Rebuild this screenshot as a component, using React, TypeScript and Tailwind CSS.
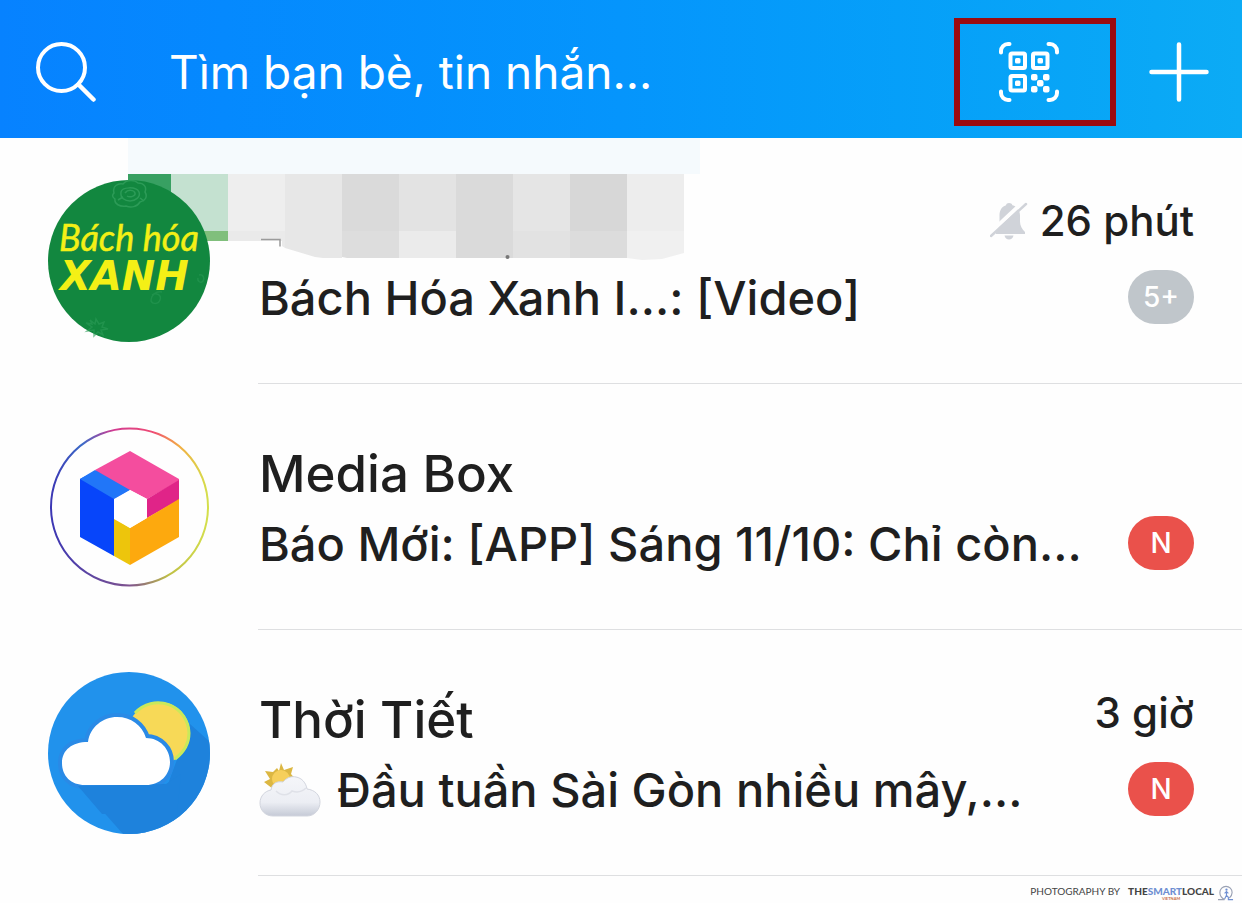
import type { ReactNode } from "react";

type Chat = {
  id: string;
  title?: string;
  message: string;
  time?: string;
  muted?: boolean;
  badge: string;
  badgeLabel: string;
  unread?: boolean;
  avatar: ReactNode;
  emoji?: ReactNode;
  cover?: ReactNode;
};

function SearchIcon() {
  return (
    <svg viewBox="0 0 60 60" className="size-[60px] shrink-0" fill="none" stroke="white" role="img" aria-label="Tìm kiếm">
      <circle cx="25.5" cy="25.5" r="23.5" strokeWidth="4" />
      <path d="M42.5 42.5 57.5 57.5" strokeWidth="4.5" strokeLinecap="round" />
    </svg>
  );
}

function QrIcon() {
  return (
    <svg viewBox="0 0 60 60" className="size-[60px]" fill="none" stroke="white" aria-hidden="true">
      <path
        d="M2 10.5V9a7 7 0 0 1 7-7h1.5M49.5 2H51a7 7 0 0 1 7 7v1.5M58 49.5V51a7 7 0 0 1-7 7h-1.5M10.5 58H9a7 7 0 0 1-7-7v-1.5"
        strokeWidth="4"
        strokeLinecap="round"
      />
      <g strokeWidth="4">
        <rect x="11.5" y="11.5" width="14.5" height="14.5" rx="1.5" />
        <rect x="34" y="11.5" width="14.5" height="14.5" rx="1.5" />
        <rect x="11.5" y="34" width="14.5" height="14.5" rx="1.5" />
      </g>
      <g fill="white" stroke="none">
        <rect x="16" y="16" width="5.5" height="5.5" rx="1.5" />
        <rect x="38.5" y="16" width="5.5" height="5.5" rx="1.5" />
        <rect x="16" y="38.5" width="5.5" height="5.5" rx="1.5" />
        <rect x="32" y="32" width="6.5" height="6.5" rx="2" />
        <rect x="44" y="32" width="6.5" height="6.5" rx="2" />
        <rect x="38" y="38" width="6.5" height="6.5" rx="2" />
        <rect x="32" y="44" width="6.5" height="6.5" rx="2" />
        <rect x="44" y="44" width="6.5" height="6.5" rx="2" />
      </g>
    </svg>
  );
}

function PlusIcon() {
  return (
    <svg viewBox="0 0 60 60" className="size-[60px]" stroke="white" strokeWidth="4.5" strokeLinecap="round" aria-hidden="true">
      <path d="M30 2.5v55M2.5 30h55" />
    </svg>
  );
}

function MutedBell() {
  return (
    <svg viewBox="0 0 38 38" className="size-[38px]" role="img" aria-label="Muted">
      <g fill="#d0d3d9">
        <path d="M19 1c1.7 0 3 .8 3.400 2.200C27.500 4.600 30 8.500 30 13.500v6c0 4 2 7.500 5 10.500v2H6v-2c2.600-3 3.500-6.500 3.500-10.500v-6C9.500 8.500 11.500 4.600 16 3.200 16.300 1.800 17.400 1 19 1Z" />
        <path d="M14.500 33.500h9c-.5 2.500-2.300 4-4.500 4s-4-1.500-4.500-4Z" />
      </g>
      <path d="M0 31 34 -1" stroke="#fefefe" strokeWidth="4" />
      <path d="M1 34 36 2" stroke="#d0d3d9" strokeWidth="2.5" strokeLinecap="round" />
    </svg>
  );
}

function GroceryAvatar() {
  return (
    <svg viewBox="0 0 162 162" className="size-[162px]">
      <circle cx="81" cy="81" r="81" fill="#12873f" />
      <g fill="none" stroke="#2c9b57" strokeWidth="1.5">
        <path d="M66 13c-2-7 4-10 9-9 4-5 12-4 15-1 6 0 9 4 7 9 3 5 0 9-5 10-3 5-9 6-14 4-6 1-12-2-11-7-3-2-3-4-1-6Z" />
        <path d="M73 12c1-5 15-6 18 0 2 5-4 9-9 9s-10-3-9-9Z" />
        <path d="M77 13c3-4 9-3 10 0s-5 5-8 3M70 20l5-3M92 18l4 3" />
        <path d="m42 140 5 4 1-5 3 5 5-2-2 5 6 2-7 1 2 5-5-3-4 4v-6l-7 1 5-4-6-4 6 1Z" opacity=".6" />
        <path d="M104 115c4-3 10 0 8 5s-9 4-9 0 4-9 11-8M151 95c4-1 6 3 4 6s-6 0-5-3" opacity=".5" />
      </g>
      <g fill="#f4f016" fontStyle="italic">
        <text x="11" y="71" fontFamily="Lato, sans-serif" fontSize="36" stroke="#f4f016" strokeWidth=".5">
          Bách hóa
        </text>
        <text x="12" y="110" fontFamily="DejaVu Sans, sans-serif" fontWeight="700" fontSize="40">
          XANH
        </text>
      </g>
    </svg>
  );
}

function MediaBoxAvatar() {
  return (
    <svg viewBox="0 0 162 162" className="size-[162px]" aria-hidden="true">
      <defs>
        <linearGradient id="ringTop" x1="0" x2="1">
          <stop offset="0" stopColor="#3c37b4" />
          <stop offset=".2" stopColor="#3b6bc8" />
          <stop offset=".4" stopColor="#d23b91" />
          <stop offset=".65" stopColor="#ef4c74" />
          <stop offset=".82" stopColor="#f2ae43" />
          <stop offset="1" stopColor="#d4df4c" />
        </linearGradient>
        <linearGradient id="ringBottom" x1="0" x2="1">
          <stop offset="0" stopColor="#3c37b4" />
          <stop offset=".5" stopColor="#7f538e" />
          <stop offset=".75" stopColor="#bfbf45" />
          <stop offset="1" stopColor="#d4df4c" />
        </linearGradient>
      </defs>
      <g fill="none" strokeWidth="2">
        <path d="M3 81a78.500 78.500 0 0 1 157 0" stroke="url(#ringTop)" />
        <path d="M3 81a78.500 78.500 0 0 0 157 0" stroke="url(#ringBottom)" />
      </g>
      <path d="M32 53 49 44 82 62v2L66 74v56L32 111Z" fill="#0745fa" />
      <path d="M32 53 47 44 82 62v2L66 73Z" fill="#2176f8" />
      <path d="m82 25 49 28v2L99 73 82 64 47 44Z" fill="#f44d9e" />
      <path d="m99 73 32-19v20L99 92Z" fill="#e02488" />
      <path d="m66 92 16 10v37l-16-9Z" fill="#edc50c" />
      <path d="m82 102 49-29v38l-49 28Z" fill="#fda90e" />
      <path d="m82 64 17 9v19l-17 10-16-9V73Z" fill="white" />
    </svg>
  );
}

function WeatherAvatar() {
  return (
    <svg viewBox="0 0 162 162" className="size-[162px]" aria-hidden="true">
      <defs>
        <clipPath id="disc">
          <circle cx="81" cy="81" r="81" />
        </clipPath>
        <path
          id="cloud"
          d="M37 113C23 113 14 104 14 91s10-21 26-21C42 55 55 45 69 45c14 0 25 8 29 21 14 0 24 11 24 24s-10 23-24 23Z"
        />
      </defs>
      <g clipPath="url(#disc)">
        <path fill="#2192ec" d="M0 0h162v162H0z" />
        <path d="m28 109 47 53h87V70l-20-18-22 60Z" fill="#1e82dc" />
        <circle cx="111" cy="61" r="31" fill="#f7d957" />
        <path d="M87 41a31 31 0 0 1 54 20c0 11-6 20-14 26" fill="none" stroke="#c9e95a" strokeWidth="3" />
        <use href="#cloud" stroke="#2a8ae6" strokeWidth="8" />
        <path d="m30 114 24 28h75l4-40-15 10Z" fill="#1e82dc" />
        <use href="#cloud" fill="white" />
      </g>
    </svg>
  );
}

function SunCloudEmoji() {
  return (
    <svg viewBox="0 0 62 54" className="h-[54px] w-[62px] shrink-0" aria-hidden="true">
      <defs>
        <linearGradient id="puff" x1="0" y1="0" x2="0" y2="1">
          <stop offset="0" stopColor="#f5f6f9" />
          <stop offset=".65" stopColor="#eceef4" />
          <stop offset="1" stopColor="#c5cad6" />
        </linearGradient>
      </defs>
      <path d="m22 0 3 7 9-3-2 7 6 7-12 9-12-1-9-7 6-3-5-8 8 1 4-4 2 3Z" fill="#dcb742" />
      <circle cx="22" cy="16" r="9" fill="#f6cf5b" />
      <path
        d="M14 53C6 53 1 47 1 40s5-12 11-13c1-7 6-9 12-8 4-5 9-6 13-5 6 1 10 6 11 12 8 1 13 6 13 13s-5 14-13 14Z"
        fill="url(#puff)"
        stroke="#d2d5de"
      />
      <path d="M17 28c5 5 12 5 16 0 6 2 10 1 14-3" fill="none" stroke="#dfe1e8" strokeWidth="1.5" />
    </svg>
  );
}

// pixelated cover over the first chat's name
function MosaicCover() {
  return (
    <svg viewBox="0 0 572 126" className="absolute top-0 left-32 h-[126px] w-[572px]" aria-hidden="true">
      <path fill="#f5fafd" d="M0 0h572v36H0z" />
      <path fill="#38a062" d="M0 36h43v57H0z" />
      <path fill="#c4e1d0" d="M43 36h57v57H43z" />
      <path fill="#80bf7c" d="M43 93h57v10H43z" />
      <path fill="#eeeeee" d="M100 36h57v57h-57z" />
      <path fill="#eaeaea" d="M100 93h57v17l-3-2v-5h-54z" />
      <path fill="#e7e7e7" d="M157 36h57v84h-19l-8-1-10-3-20-6z" />
      <path fill="#dadada" d="M214 36h57v57h-57z" />
      <path fill="#dddddd" d="M214 93h57v27h-52l-5-1z" />
      <path fill="#e3e3e3" d="M271 36h57v57h-57z" />
      <path fill="#ebebeb" d="M271 93h57v27h-57z" />
      <path fill="#dadada" d="M328 36h57v84h-57z" />
      <path fill="#e5e5e5" d="M385 36h57v57h-57z" />
      <path fill="#e2e2e2" d="M385 93h57v27h-57z" />
      <path fill="#d7d7d7" d="M442 36h57v57h-57z" />
      <path fill="#dcdcdc" d="M442 93h57v27h-57z" />
      <path fill="#ededed" d="M499 36h57v57h-57z" />
      <path fill="#f0f0f0" d="M499 93h57v22l-22 6-20 1-15-2z" />
      <path d="M133 101.5h19v7" fill="none" stroke="#9b9b9b" strokeWidth="1.5" />
      <circle cx="379.5" cy="119" r="2" fill="#777777" />
    </svg>
  );
}

function Watermark() {
  return (
    <footer className="flex items-start justify-end gap-2 pt-[9px] pr-2 font-['Lato',sans-serif] text-[10px] leading-3 text-[#444444]">
      <span>PHOTOGRAPHY BY</span>
      <span className="flex flex-col items-center">
        <span className="font-black">
          THE<span className="text-[#6f8fd2]">SMART</span>LOCAL
        </span>
        <span className="text-[4px] leading-[4px] font-bold text-[#c96c42]">VIETNAM</span>
      </span>
      <svg viewBox="0 0 17 17" className="-ml-1 size-4" fill="none" aria-hidden="true">
        <path d="M0 15.500h7C4 14 2 12 2 8a6.500 6.500 0 0 1 13 0c0 3-2 5-3 6" stroke="#9aa1b4" strokeWidth="1.2" />
        <path d="M9 7v4l-2 4M9 11l2 2v2.500h5M7 9l2-2 2 2" stroke="#6f8fd2" strokeWidth="1.2" />
        <circle cx="9" cy="5" r="1.2" fill="#6f8fd2" />
      </svg>
    </footer>
  );
}

const chats: Chat[] = [
  {
    id: "bach-hoa-xanh",
    message: "Bách Hóa Xanh I...: [Video]",
    time: "26 phút",
    muted: true,
    badge: "5+",
    badgeLabel: "More than 5 unread",
    avatar: <GroceryAvatar />,
    cover: <MosaicCover />,
  },
  {
    id: "media-box",
    title: "Media Box",
    message: "Báo Mới: [APP] Sáng 11/10: Chỉ còn...",
    badge: "N",
    badgeLabel: "New",
    unread: true,
    avatar: <MediaBoxAvatar />,
  },
  {
    id: "thoi-tiet",
    title: "Thời Tiết",
    message: "Đầu tuần Sài Gòn nhiều mây,...",
    time: "3 giờ",
    badge: "N",
    badgeLabel: "New",
    unread: true,
    avatar: <WeatherAvatar />,
    emoji: <SunCloudEmoji />,
  },
];

function ChatRow({ chat }: { chat: Chat }) {
  return (
    <li className="relative flex pl-12">
      {chat.cover}
      <div className="relative shrink-0 self-center">{chat.avatar}</div>
      <div className="ml-12 flex min-w-0 flex-1 justify-between border-b border-[#dedfe1] pt-[58px] pr-12 pb-[51px] pl-px font-medium">
        <div className="min-w-0 whitespace-nowrap">
          {chat.title ? (
            <h2 className="mb-1 text-[51px] leading-[64px]">{chat.title}</h2>
          ) : (
            <div className="mb-1 h-16" />
          )}
          <p className="flex items-center gap-4 text-[47px] leading-[68px]">
            {chat.emoji}
            {chat.message}
          </p>
        </div>
        <div className="flex shrink-0 flex-col items-end gap-6">
          <div className="flex h-[50px] items-center gap-3 text-[42px] leading-[50px] whitespace-nowrap">
            {chat.muted && <MutedBell />}
            {chat.time && <time>{chat.time}</time>}
          </div>
          <span
            aria-label={chat.badgeLabel}
            className={`flex h-[54px] w-[66px] items-center justify-center rounded-full text-[28px] leading-8 text-white ${
              chat.unread ? "bg-[#ea514b]" : "bg-[#c0c6cb]"
            }`}
          >
            {chat.badge}
          </span>
        </div>
      </div>
    </li>
  );
}

export default function App() {
  return (
    <div className="min-h-screen bg-[#fefefe] font-['Inter',sans-serif] text-[#1f1f1f]">
      <header className="flex items-center bg-linear-to-r from-[#0782ff] via-[#0595fc] to-[#0cabf5] pt-[18px] pr-[33px] pb-3 pl-9">
        <label htmlFor="search">
          <SearchIcon />
        </label>
        <input
          id="search"
          type="text"
          placeholder="Tìm bạn bè, tin nhắn..."
          className="ml-[73px] min-w-0 flex-1 bg-transparent text-[46px] leading-[60px] text-white outline-none placeholder:text-white"
        />
        <button
          type="button"
          aria-label="Quét mã QR"
          className="mr-[33px] flex h-[108px] w-[162px] shrink-0 items-center border-6 border-[#9b0b10] pl-[39px]"
        >
          <QrIcon />
        </button>
        <button type="button" aria-label="Thêm" className="shrink-0">
          <PlusIcon />
        </button>
      </header>

      <ul>
        {chats.map((chat) => (
          <ChatRow key={chat.id} chat={chat} />
        ))}
      </ul>

      <Watermark />
    </div>
  );
}
